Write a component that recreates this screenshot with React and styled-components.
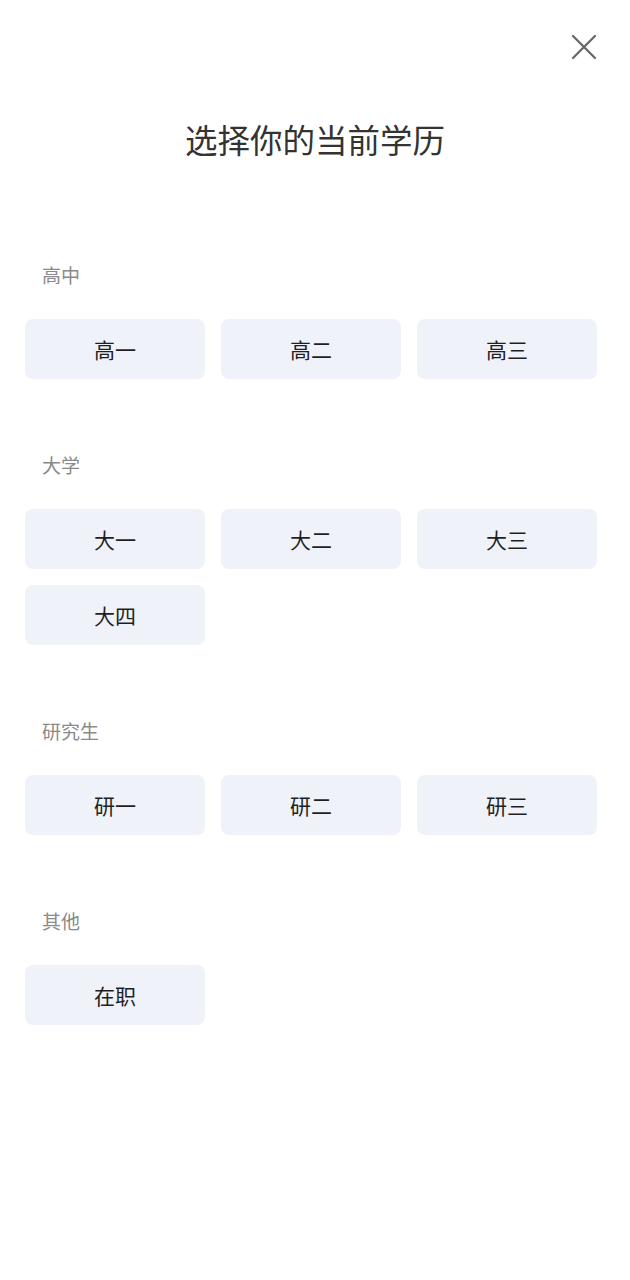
import styled, { createGlobalStyle } from 'styled-components';

const GlobalStyle = createGlobalStyle`
    html, body {
        margin: 0;
        padding: 0;
        background: #ffffff;
    }
    body {
        font-family: "Noto Sans CJK SC", "Noto Sans", sans-serif;
    }
`;

const Page = styled.div`
    width: 630px;
    min-height: 1280px;
    box-sizing: border-box;
    padding: 0 34px 0 25px;
    display: flex;
    flex-direction: column;
`;

const TopBar = styled.div`
    display: flex;
    justify-content: flex-end;
    padding-top: 34px;
    height: 26px;
`;

const CloseButton = styled.button`
    border: none;
    background: none;
    padding: 0;
    width: 26px;
    height: 26px;
    margin-right: -1px;
    cursor: pointer;
    display: flex;
    align-items: center;
    justify-content: center;
`;

const Title = styled.h1`
    margin: 57px 0 0;
    text-align: center;
    font-size: 32.5px;
    font-weight: 400;
    line-height: 44px;
    color: #333333;
    padding-left: 9px;
`;

const Section = styled.section`
    margin-top: ${(props) => props.$top}px;
`;

const SectionLabel = styled.div`
    padding-left: 17px;
    font-size: 19px;
    line-height: 28px;
    color: #8a8a8a;
`;

const Grid = styled.div`
    margin-top: 30px;
    display: grid;
    grid-template-columns: repeat(3, 180px);
    column-gap: 16px;
    row-gap: 16px;
`;

const Option = styled.button`
    height: 60px;
    border: none;
    border-radius: 8px;
    background: #eff2f8;
    font-family: "Noto Sans CJK SC", "Noto Sans", sans-serif;
    font-size: 21px;
    color: #1f1f1f;
    cursor: pointer;
    padding: 0;
`;

const groups = [
    { label: '高中', top: 100, items: ['高一', '高二', '高三'] },
    { label: '大学', top: 72, items: ['大一', '大二', '大三', '大四'] },
    { label: '研究生', top: 72, items: ['研一', '研二', '研三'] },
    { label: '其他', top: 72, items: ['在职'] },
];

function CloseIcon() {
    return (
        <svg width="26" height="26" viewBox="0 0 26 26" fill="none">
            <path
                d="M2 2 L24 24 M24 2 L2 24"
                stroke="#666666"
                strokeWidth="2.2"
                strokeLinecap="round"
            />
        </svg>
    );
}

export default function App() {
    return (
        <>
            <GlobalStyle />
            <Page>
                <TopBar>
                    <CloseButton aria-label="关闭">
                        <CloseIcon />
                    </CloseButton>
                </TopBar>
                <Title>选择你的当前学历</Title>
                {groups.map((group) => (
                    <Section key={group.label} $top={group.top}>
                        <SectionLabel>{group.label}</SectionLabel>
                        <Grid>
                            {group.items.map((item) => (
                                <Option key={item}>{item}</Option>
                            ))}
                        </Grid>
                    </Section>
                ))}
            </Page>
        </>
    );
}
